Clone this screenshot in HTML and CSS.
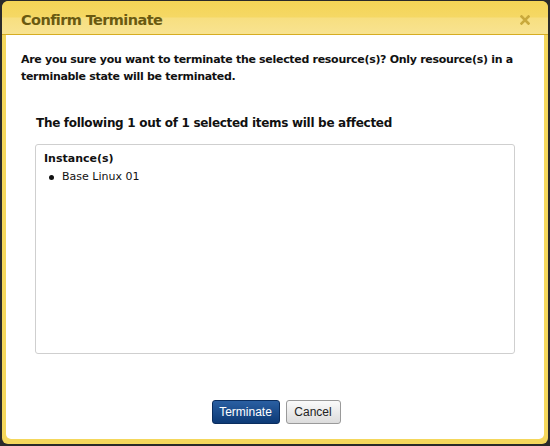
FILE: index.html
```html
<!DOCTYPE html>
<html>
<head>
<meta charset="utf-8">
<link rel="stylesheet" href="styles.css">
</head>
<body>
<div class="dialog">
  <div class="titlebar">
    <span class="title">Confirm Terminate</span>
    <svg class="close" width="10" height="10" viewBox="0 0 10 10"><path d="M1.5 1.5 L8.5 8.5 M8.5 1.5 L1.5 8.5" stroke="#c9a93c" stroke-width="2.6" stroke-linecap="square"/></svg>
  </div>
  <div class="content">
    <p class="question">Are you sure you want to terminate the selected resource(s)? Only resource(s) in a terminable state will be terminated.</p>
    <div class="affected">
      <h3 class="heading">The following 1 out of 1 selected items will be affected</h3>
      <div class="listbox">
        <div class="group">Instance(s)</div>
        <ul class="items"><li>Base Linux 01</li></ul>
      </div>
    </div>
    <div class="actions">
      <button class="btn primary">Terminate</button>
      <button class="btn secondary">Cancel</button>
    </div>
  </div>
</div>
</body>
</html>
```
FILE: styles.css
```css
html, body { margin: 0; padding: 0; }
body { background: #2a2a2a; width: 550px; height: 446px; overflow: hidden; }
.dialog {
  margin: 1px 2px 0 2px;
  width: 546px; height: 443px;
  box-sizing: border-box;
  background: #f4d75c;
  border-radius: 7px 7px 6px 6px;
  padding: 0 4px 5px 4px;
  display: flex; flex-direction: column;
}
.titlebar {
  height: 33px;
  flex: none;
  border-bottom: 1px solid #d6ad22;
  background: linear-gradient(#f4d456 0%, #f5d864 48%, #f7df80 52%, #f8e391 100%);
  display: flex; align-items: center; justify-content: space-between;
  border-radius: 6px 6px 0 0;
  margin: 0 -4px;
  padding-left: 19px; padding-right: 18px;
}
.title {
  font-family: "DejaVu Sans", sans-serif;
  font-weight: bold;
  font-size: 14.5px;
  letter-spacing: -0.6px;
  color: #6a5a10;
  padding-top: 4px;
}
.close { margin-top: 5px; }
.content {
  flex: 1;
  background: #fff;
  border-radius: 0 0 5px 5px;
  padding: 16px 15px 0 15px;
  display: flex; flex-direction: column;
  font-family: "DejaVu Sans", sans-serif;
  color: #111;
}
.question {
  margin: 0;
  font-size: 11px;
  font-weight: bold;
  letter-spacing: -0.3px;
  line-height: 17px;
}
.affected { padding: 0 14px; margin-top: 30px; }
.heading {
  margin: 0;
  font-size: 12px;
  font-weight: bold;
  letter-spacing: -0.3px;
  line-height: 16px;
  padding-left: 1px;
}
.listbox {
  margin-top: 13px;
  height: 210px;
  box-sizing: border-box;
  border: 1px solid #cfcfcf;
  border-radius: 3px;
  padding: 6px 8px;
}
.group { font-size: 11px; font-weight: bold; line-height: 16px; }
.items { list-style: none; margin: 2px 0 0 0; padding: 0 0 0 18px; font-size: 11px; line-height: 16px; }
.items li { position: relative; }
.items li::before {
  content: ""; position: absolute; left: -13px; top: 6px;
  width: 5px; height: 5px; border-radius: 50%; background: #111;
}
.actions {
  margin-top: 46px;
  display: flex; justify-content: center; gap: 6px;
  padding-left: 2px;
}
.btn {
  font-family: "Liberation Sans", Arial, sans-serif;
  font-size: 12px;
  height: 24px;
  border-radius: 3px;
  padding: 0 6px;
  cursor: pointer;
}
.primary {
  width: 68px;
  color: #fff;
  background: linear-gradient(#2a5fa2, #0d3a76);
  border: 1px solid #0a2d5e;
}
.secondary {
  width: 55px;
  color: #222;
  background: linear-gradient(#fafafa, #dcdcdc);
  border: 1px solid #9a9a9a;
}
```
